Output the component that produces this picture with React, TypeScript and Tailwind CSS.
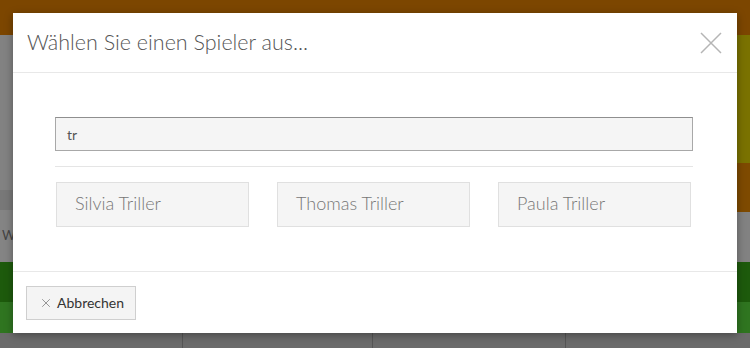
import { X } from 'lucide-react'

const players = ['Silvia Triller', 'Thomas Triller', 'Paula Triller']

function Backdrop() {
  return (
    <div className="flex h-[348px] w-[750px] flex-col bg-[#808080]">
      {/* top bar */}
      <div className="h-[35px] bg-[#7c4600]" />
      <div className="flex flex-1">
        {/* left side */}
        <div className="flex flex-1 flex-col">
          <div className="h-[155px] bg-[#828282]" />
          <div className="h-[20px] bg-[#787878]" />
          <div className="flex h-[52px] items-center bg-[#848484] pl-[2px] text-[13px] text-[#444]">W</div>
          <div className="h-[40px] bg-[#1d5a0c]" />
          <div className="h-[31px] bg-[#2f7520]" />
        </div>
        {/* right side */}
        <div className="flex flex-1 flex-col">
          <div className="h-[128px] bg-[#7a7200]" />
          <div className="h-[49px] bg-[#7e4a00]" />
          <div className="h-[50px] bg-[#828282]" />
          <div className="h-[40px] bg-[#1d5a0c]" />
          <div className="h-[31px] bg-[#2f7520]" />
        </div>
      </div>
      {/* bottom table row */}
      <div className="flex h-[15px] bg-[#6b6b6b]">
        <div className="w-[183px] border-r border-[#555]" />
        <div className="w-[190px] border-r border-[#555]" />
        <div className="w-[193px] border-r border-[#555]" />
        <div className="flex-1" />
      </div>
    </div>
  )
}

export default function App() {
  return (
    <div className="relative h-[348px] w-[750px] overflow-hidden font-['Lato','Open_Sans',sans-serif]">
      <Backdrop />

      <div className="absolute left-[13px] top-[13px] flex w-[724px] flex-col bg-white shadow-[0_2px_8px_rgba(0,0,0,0.35)]">
        {/* header */}
        <div className="flex h-[60px] items-center justify-between border-b border-[#e8e8e8] pl-[14px] pr-[15px]">
          <h2 className="font-['Lato_Light','Lato',sans-serif] text-[21.5px] font-light text-[#555]">
            Wählen Sie einen Spieler aus...
          </h2>
          <svg width="22" height="22" viewBox="0 0 22 22" className="text-[#b5b5b5]">
            <path d="M1 1 L21 21 M21 1 L1 21" stroke="currentColor" strokeWidth="1.5" fill="none" />
          </svg>
        </div>

        {/* body */}
        <div className="flex h-[198px] flex-col pl-[42px] pr-[44px] pt-[44px]">
          <div className="flex h-[34px] items-center border border-[#a8a8a8] border-t-[#8f8f8f] bg-[#f5f5f5] px-[11px] text-[14px] text-[#555]">
            tr
          </div>
          <div className="mt-[15px] border-t border-[#e5e5e5]" />
          <div className="mt-[15px] flex gap-[28px] pl-[1px]">
            {players.map((p) => (
              <div
                key={p}
                className="flex h-[45px] w-[193px] items-center border border-[#e0e0e0] bg-[#f5f5f5] px-[18px] pb-[2px] font-['Lato_Light','Lato',sans-serif] text-[18px] font-light text-[#777]"
              >
                {p}
              </div>
            ))}
          </div>
        </div>

        {/* footer */}
        <div className="flex h-[62px] items-center border-t border-[#e8e8e8] pl-[13px]">
          <button className="flex h-[34px] items-center gap-[4px] border border-[#cfcfcf] bg-[#f4f4f4] pl-[12px] pr-[11px] text-[14px] text-[#333]">
            <X size={14} strokeWidth={1.3} className="text-[#777]" />
            Abbrechen
          </button>
        </div>
      </div>
    </div>
  )
}
